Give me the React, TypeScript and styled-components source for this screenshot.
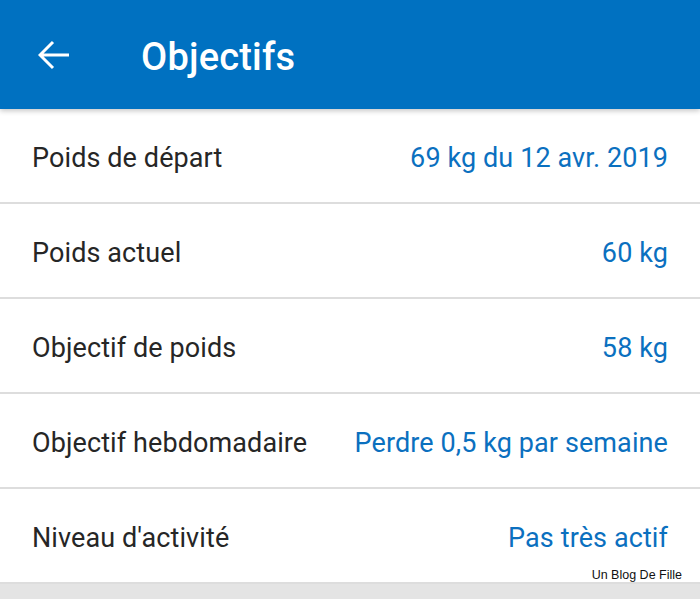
import React from 'react';
import styled, { createGlobalStyle } from 'styled-components';

// ============= 資料 =============

interface GoalRow {
  label: string;
  value: string;
}

const rows: GoalRow[] = [
  { label: 'Poids de départ', value: '69 kg du 12 avr. 2019' },
  { label: 'Poids actuel', value: '60 kg' },
  { label: 'Objectif de poids', value: '58 kg' },
  { label: 'Objectif hebdomadaire', value: 'Perdre 0,5 kg par semaine' },
  { label: "Niveau d'activité", value: 'Pas très actif' },
];

// ============= 樣式 =============

const GlobalStyle = createGlobalStyle`
  html, body {
    margin: 0;
    padding: 0;
    background: #e4e4e4;
    font-family: Roboto, "Noto Sans", Arial, sans-serif;
  }
`;

const Screen = styled.div`
  position: relative;
  width: 700px;
  height: 599px;
  overflow: hidden;
  background: #e4e4e4;
  display: flex;
  flex-direction: column;
`;

const AppBar = styled.header`
  height: 109px;
  flex-shrink: 0;
  background: #0071c1;
  display: flex;
  align-items: center;
  padding-left: 38px;
  box-shadow: 0 2px 5px rgba(0, 0, 0, 0.22);
  position: relative;
  z-index: 1;
`;

const BackButton = styled.button`
  width: 32px;
  height: 30px;
  padding: 0;
  border: none;
  background: none;
  display: flex;
  align-items: center;
  justify-content: center;
  margin-right: 71px;
`;

const Title = styled.h1`
  margin: 0;
  color: #ffffff;
  font-family: Roboto, sans-serif;
  font-weight: 500;
  font-size: 38px;
  letter-spacing: 0.2px;
  margin-top: 4px;
`;

const List = styled.div`
  background: #ffffff;
  display: flex;
  flex-direction: column;
`;

const Row = styled.div`
  height: 93px;
  display: flex;
  align-items: center;
  justify-content: space-between;
  padding: 0 32px;
  border-bottom: 2px solid #dddddd;
`;

const Label = styled.span`
  font-size: 27px;
  color: #262626;
  letter-spacing: 0.1px;
  margin-top: 4px;
`;

const Value = styled.span`
  font-size: 27px;
  color: #0b70bf;
  letter-spacing: 0.1px;
  margin-top: 4px;
`;

const Watermark = styled.span`
  position: absolute;
  right: 18px;
  bottom: 17px;
  font-family: "Liberation Sans", Arial, sans-serif;
  font-size: 12.5px;
  color: #111111;
`;

// ============= 組件 =============

const BackArrow = () => (
  <svg width="32" height="30" viewBox="0 0 32 30" fill="none">
    <path d="M31 15H3M15 2L2 15l13 13" stroke="#fff" strokeWidth="3" />
  </svg>
);

export default function App() {
  return (
    <>
      <GlobalStyle />
      <Screen>
        <AppBar>
          <BackButton aria-label="Retour">
            <BackArrow />
          </BackButton>
          <Title>Objectifs</Title>
        </AppBar>
        <List>
          {rows.map(r => (
            <Row key={r.label}>
              <Label>{r.label}</Label>
              <Value>{r.value}</Value>
            </Row>
          ))}
        </List>
        <Watermark>Un Blog De Fille</Watermark>
      </Screen>
    </>
  );
}
